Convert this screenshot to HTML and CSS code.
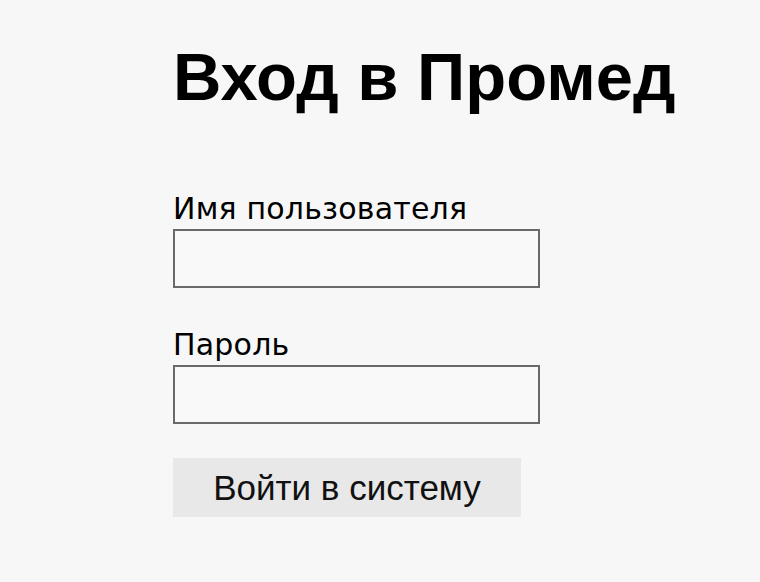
FILE: index.html
```html
<!DOCTYPE html>
<html lang="ru">
<head>
<meta charset="utf-8">
<title>Вход в Промед</title>
<link rel="stylesheet" href="styles.css">
</head>
<body>
<main class="login">
  <h1 class="login__title">Вход в Промед</h1>
  <form class="login__form">
    <label class="field">
      <span class="field__label">Имя пользователя</span>
      <input class="field__input" type="text">
    </label>
    <label class="field">
      <span class="field__label">Пароль</span>
      <input class="field__input" type="password">
    </label>
    <button class="login__button" type="button">Войти в систему</button>
  </form>
</main>
</body>
</html>
```

FILE: styles.css
```css
html, body {
  margin: 0;
  padding: 0;
}
body {
  background: #f7f7f7;
  width: 760px;
  height: 582px;
  overflow: hidden;
}
.login {
  padding: 41px 0 0 173px;
  display: flex;
  flex-direction: column;
}
.login__title {
  margin: 0;
  font-family: "Liberation Sans", Arial, sans-serif;
  font-weight: bold;
  font-size: 67px;
  line-height: 72px;
  color: #000;
}
.login__form {
  display: flex;
  flex-direction: column;
  margin-top: 79px;
}
.field {
  display: flex;
  flex-direction: column;
}
.field + .field {
  margin-top: 40px;
}
.field__label {
  font-family: "DejaVu Sans", sans-serif;
  font-size: 30px;
  line-height: 34px;
  letter-spacing: 0.2px;
  margin-bottom: 3px;
  color: #000;
}
.field__input {
  box-sizing: border-box;
  width: 367px;
  height: 59px;
  margin: 0;
  border: 2px solid #6a6a6a;
  background: #f9f9f9;
  outline: none;
}
.login__button {
  box-sizing: border-box;
  width: 348px;
  height: 59px;
  margin-top: 34px;
  border: none;
  background: #e8e8e8;
  font-family: "Liberation Sans", Arial, sans-serif;
  font-size: 35px;
  color: #111;
  padding: 0;
}
```
